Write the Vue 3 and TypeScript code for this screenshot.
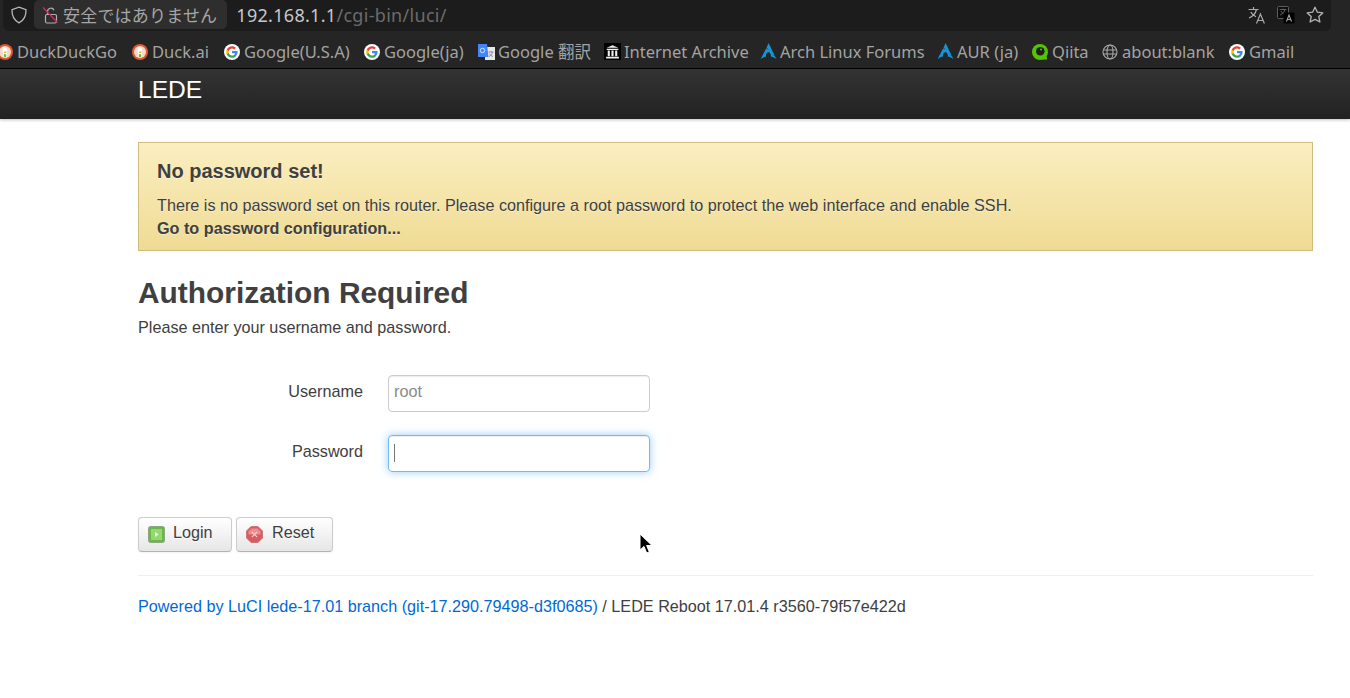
<script setup lang="ts">
interface Bookmark { label: string; icon: string; width: number }
const bookmarks: Bookmark[] = [
  { label: 'DuckDuckGo', icon: 'duck', width: 135 },
  { label: 'Duck.ai', icon: 'duck', width: 92 },
  { label: 'Google(U.S.A)', icon: 'google', width: 140 },
  { label: 'Google(ja)', icon: 'google', width: 114 },
  { label: 'Google 翻訳', icon: 'translate', width: 126 },
  { label: 'Internet Archive', icon: 'archive', width: 156 },
  { label: 'Arch Linux Forums', icon: 'arch', width: 177 },
  { label: 'AUR (ja)', icon: 'arch', width: 95 },
  { label: 'Qiita', icon: 'qiita', width: 70 },
  { label: 'about:blank', icon: 'globe', width: 127 },
  { label: 'Gmail', icon: 'google', width: 64 },
]
</script>

<template>
  <div class="screen">
    <div class="chrome">
      <div class="urlbar">
        <svg class="shield" width="18" height="18" viewBox="0 0 18 18" fill="none" stroke="#b8b8b8" stroke-width="1.3">
          <path d="M9 1.200 16 3.700c.2 6-1.700 10.400-7 13.100C3.700 14.100 1.800 9.700 2 3.700z" />
        </svg>
        <div class="security">
          <svg width="17" height="18" viewBox="0 0 17 18" fill="none">
            <path d="M5.500 8.500V5.500a3.400 3.400 0 0 1 6.500-1.300" stroke="#b0b0b0" stroke-width="1.200" />
            <rect x="3.500" y="8.500" width="11" height="8.500" rx="1.500" stroke="#b0b0b0" stroke-width="1.200" />
            <path d="M1 1.500l14.500 15" stroke="#e0245e" stroke-width="1.300" />
          </svg>
          <span>安全ではありません</span>
        </div>
        <div class="address"><span class="host">192.168.1.1</span><span class="path">/cgi-bin/luci/</span></div>
        <div class="bar-actions">
          <svg width="18" height="18" viewBox="0 0 18 18" fill="none" stroke="#ababab" stroke-width="1.200">
            <path d="M.5 3.500h10M5.500 1v2.500M8.500 3.500C7.500 7.500 4.500 10.500 1 12M2.800 6c1 2 3.200 4 5.200 4.800" />
            <path d="M8.500 17.500l3.900-9.500 4 9.500M10 14.500h4.900" />
          </svg>
          <svg width="18" height="18" viewBox="0 0 18 18">
            <rect x=".5" y=".5" width="11" height="12" rx="1" fill="#0c0c0c" stroke="#5e5e5e" stroke-width="1" />
            <path d="M2.500 3.500h7M6 2.500v1M8 3.500C7.400 6 5.500 8 3 9M4 5c.8 1.600 2.300 3 4 3.800" stroke="#6a6a6a" stroke-width=".9" fill="none" />
            <rect x="6.500" y="6.500" width="11" height="11" rx="1" fill="#000" />
            <path d="M9.500 15.500l2.500-6.500 2.500 6.500M10.300 13.500h3.400" stroke="#a8a8a8" stroke-width="1.100" fill="none" />
          </svg>
          <svg width="18" height="18" viewBox="0 0 18 18" fill="none" stroke="#b4b4b4" stroke-width="1.300">
            <path d="M9 1.200l2.400 5 5.400.7-4 3.700 1.100 5.400L9 13.400 4.100 16l1.100-5.400-4-3.700 5.400-.7z" stroke-linejoin="round" />
          </svg>
        </div>
      </div>
      <nav class="bookmarks">
        <div v-for="b in bookmarks" :key="b.label" class="bookmark" :style="{ width: b.width + 'px' }">
          <svg v-if="b.icon === 'duck'" width="16" height="16" viewBox="0 0 16 16">
            <circle cx="8" cy="8" r="8" fill="#de5833" />
            <circle cx="8" cy="8" r="6" fill="#f4d9c8" />
            <path d="M5.500 3.500c2-1 4.500.3 4.700 2.700l-.2 7-3.200.3-1.200-6.500z" fill="#fff" />
            <path d="M6.700 7.600h3l-.6 1.500H7.200z" fill="#f5b921" />
            <path d="M6.800 10l2.500.4-.2 2.700-1.900.2z" fill="#5db84a" />
          </svg>
          <svg v-else-if="b.icon === 'google'" width="16" height="16" viewBox="0 0 16 16">
            <circle cx="8" cy="8" r="8" fill="#fff" />
            <path d="M13.600 8.100c0-.5 0-.8-.1-1.200H8v2.300h3.100c-.1.700-.6 1.300-1.200 1.700v1.400h1.900c1.100-1 1.800-2.500 1.800-4.200z" fill="#4285f4" />
            <path d="M8 13.800c1.600 0 2.900-.5 3.800-1.500l-1.900-1.400c-.5.300-1.200.6-1.900.6-1.500 0-2.800-1-3.300-2.400H2.800v1.500c.9 1.900 2.900 3.200 5.200 3.200z" fill="#34a853" />
            <path d="M4.700 9.100c-.2-.7-.2-1.500 0-2.200V5.400H2.800c-.8 1.600-.8 3.600 0 5.200z" fill="#fbbc05" />
            <path d="M8 4.500c.9 0 1.600.3 2.200.9l1.700-1.700C10.900 2.800 9.600 2.200 8 2.200c-2.300 0-4.300 1.300-5.200 3.200l1.900 1.500C5.200 5.500 6.500 4.500 8 4.500z" fill="#ea4335" />
          </svg>
          <svg v-else-if="b.icon === 'translate'" width="17" height="16" viewBox="0 0 17 16">
            <rect x="7" y="3" width="10" height="13" fill="#e8e8e8" />
            <path d="M10.500 8h5M13 7v1M14.500 8c-.500 2-1.500 3.500-3.500 4.500M11.500 9.500c.7 1.300 2 2.500 3.500 3" stroke="#888" stroke-width=".9" fill="none" />
            <path d="M0 0h9l1.500 13H0z" fill="#4285f4" />
            <circle cx="4.500" cy="6.500" r="2.200" fill="none" stroke="#dbe7fc" stroke-width="1" />
          </svg>
          <svg v-else-if="b.icon === 'archive'" width="17" height="17" viewBox="0 0 16 16">
            <rect width="16" height="16" fill="#000" />
            <path d="M2.500 4.500 8 2l5.500 2.500zM2.500 5.500h11v1h-11zM2 13h12v1.500H2z" fill="#eee" />
            <path d="M3.500 7h2v5.500h-2zM7 7h2v5.500H7zM10.500 7h2v5.500h-2z" fill="#eee" />
          </svg>
          <svg v-else-if="b.icon === 'arch'" width="17" height="17" viewBox="0 0 17 17">
            <path d="M8.500 0C7.800 1.800 7.300 3 6.500 4.700c.5.500 1.100 1.100 2.100 1.800-1.100-.4-1.800-.9-2.400-1.300C5.100 7.400 3.400 10.700.5 16c2.200-1.300 4-2.100 5.600-2.400-.1-.3-.1-.6-.1-1 0-2 1.100-3.500 2.500-3.400 1.400.1 2.400 1.700 2.400 3.700 0 .3-.1.600-.1.700 1.600.300 3.300 1.100 5.700 2.400-.5-.9-.9-1.700-1.300-2.400-.7-.5-1.400-1.200-2.900-2 1 .3 1.800.500 2.300.8C11.600 6.500 10.700 3.800 8.500 0z" fill="#1793d1" />
          </svg>
          <svg v-else-if="b.icon === 'qiita'" width="16" height="16" viewBox="0 0 16 16">
            <circle cx="8" cy="8" r="8" fill="#55c500" />
            <circle cx="8.300" cy="7.300" r="4.300" fill="#1f1f1f" />
            <path d="M10 13.500l5-1v3h-5z" fill="#55c500" />
            <circle cx="9" cy="5.600" r="1" fill="#55c500" />
          </svg>
          <svg v-else width="16" height="16" viewBox="0 0 16 16" fill="none" stroke="#a8a8a8" stroke-width="1.100">
            <circle cx="8" cy="8" r="7" />
            <ellipse cx="8" cy="8" rx="3" ry="7" />
            <path d="M1 6h14M1 10h14" />
          </svg>
          <span>{{ b.label }}</span>
        </div>
      </nav>
    </div>

    <header class="topbar">
      <div class="wrap"><a class="brand">LEDE</a></div>
    </header>

    <main class="wrap content">
      <div class="alert">
        <h4>No password set!</h4>
        <p>There is no password set on this router. Please configure a root password to protect the web interface and enable SSH.</p>
        <a class="alert-link">Go to password configuration...</a>
      </div>

      <h2>Authorization Required</h2>
      <p class="lead">Please enter your username and password.</p>

      <form class="fields" @submit.prevent>
        <div class="field">
          <label>Username</label>
          <div class="input">root</div>
        </div>
        <div class="field">
          <label>Password</label>
          <div class="input focused"><i class="caret"></i></div>
        </div>
      </form>

      <div class="actions">
        <button class="btn login" type="button">
          <svg width="17" height="17" viewBox="0 0 17 17">
            <rect x=".5" y=".5" width="16" height="16" rx="2" fill="#6cb64c" stroke="#8aa97f" />
            <rect x="3" y="3" width="11" height="11" fill="#94d96f" />
            <path d="M7 6l3.500 2.500L7 11z" fill="#f3fbe9" />
          </svg>
          <span>Login</span>
        </button>
        <button class="btn reset" type="button">
          <svg width="17" height="17" viewBox="0 0 17 17">
            <path d="M5 .5h7L16.500 5v7L12 16.500H5L.5 12V5z" fill="#db5a5f" stroke="#c9787c" />
            <path d="M5.500 2.500h6l3 3v3h-12v-3z" fill="#ee8d8f" />
            <path d="M5.800 5.800l5.400 5.400M11.200 5.800l-5.400 5.400" stroke="#f8d0d0" stroke-width="1.100" />
          </svg>
          <span>Reset</span>
        </button>
      </div>

      <footer class="foot">
        <a>Powered by LuCI lede-17.01 branch (git-17.290.79498-d3f0685)</a> / LEDE Reboot 17.01.4 r3560-79f57e422d
      </footer>
    </main>

    <svg class="pointer" width="14" height="22" viewBox="0 0 14 22">
      <path d="M1 1v16l4-3.600 2.700 6.600 2.600-1.100-2.700-6.400H13z" fill="#000" stroke="#fff" stroke-width="1" />
    </svg>
  </div>
</template>

<style>
html, body { margin: 0; background: #fff; overflow: hidden; }
</style>

<style scoped>
.screen {
  position: relative;
  width: 1350px;
  height: 698px;
  overflow: hidden;
  background: #fff;
  color: #404040;
  font-family: "Liberation Sans", Arial, sans-serif;
  font-size: 16.2px;
}
.chrome { background: #252525; font-family: "Noto Sans", "Noto Sans CJK JP", sans-serif; border-bottom: 1px solid #000; }
.urlbar {
  display: flex;
  align-items: center;
  height: 31px;
  width: 1328px;
  margin-left: 3px;
  background: #1c1c1c;
  border-radius: 0 0 6px 6px;
  box-sizing: border-box;
  padding: 0 0 2px 7px;
}
.shield { flex: none; }
.security {
  display: flex;
  align-items: center;
  gap: 4px;
  height: 29px;
  margin-left: 6px;
  padding: 0 10px 0 8px;
  background: #2e2e2e;
  border-radius: 5px;
  color: #a6a6a6;
  font-size: 17px;
  letter-spacing: .2px;
  white-space: nowrap;
}
.address { margin-left: 9px; font-size: 18px; letter-spacing: .3px; white-space: nowrap; }
.host { color: #c8c8c8; }
.path { color: #6b6b6b; }
.bar-actions { display: flex; gap: 11px; margin-left: auto; padding-right: 7px; }
.bookmarks {
  display: flex;
  align-items: center;
  box-sizing: border-box;
  height: 37px;
  padding-top: 4px;
  margin-left: -3px;
  white-space: nowrap;
}
.bookmark {
  flex: none;
  display: grid;
  grid-template-columns: 16px auto;
  justify-content: start;
  align-items: center;
  column-gap: 4px;
  color: #a3a3a3;
  font-size: 16.5px;
  line-height: 20px;
}
.topbar {
  height: 50px;
  background: linear-gradient(#333333, #222222);
  box-shadow: 0 1px 3px rgba(0, 0, 0, .25);
  position: relative;
}
.wrap { margin-left: 138px; width: 1175px; }
.brand { display: block; color: #fff; font-size: 24.6px; line-height: 41px; }
.content { padding-top: 23px; }
.alert {
  box-sizing: border-box;
  height: 109px;
  padding: 16px 18px 0;
  border: 1px solid #d0bd7c;
  background: linear-gradient(#fbefc1, #efdb94);
  text-shadow: 0 1px 0 rgba(255, 255, 255, .5);
}
.alert h4 { margin: 0 0 11px; font-size: 20px; line-height: 24px; font-weight: 700; }
.alert p { margin: 0; line-height: 23px; }
.alert-link { display: block; font-weight: 700; line-height: 23px; }
h2 { margin: 24px 0 0; font-size: 29.9px; line-height: 36px; font-weight: 700; }
.lead { margin: 5px 0 0; line-height: 22px; }
.fields { margin-top: 37px; }
.field { display: flex; align-items: center; height: 36px; margin-bottom: 24px; }
.field label { width: 225px; text-align: right; margin-top: -3px; }
.input {
  box-sizing: border-box;
  width: 262px;
  height: 37px;
  margin-left: 25px;
  padding: 0 5px;
  line-height: 30px;
  border: 1px solid #ccc;
  border-radius: 4px;
  color: #8a8a8a;
  box-shadow: inset 0 1px 1px rgba(0, 0, 0, .075);
}
.focused {
  display: flex;
  align-items: center;
  border-color: rgba(82, 168, 236, .8);
  box-shadow: inset 0 1px 1px rgba(0, 0, 0, .075), 0 0 8px rgba(82, 168, 236, .6);
}
.caret { width: 1px; height: 18px; background: #777; }
.actions { display: flex; gap: 4px; margin-top: 46px; }
.btn {
  display: flex;
  align-items: flex-start;
  gap: 9px;
  box-sizing: border-box;
  height: 35px;
  padding: 8px 0 0 9px;
  border: 1px solid #ccc;
  border-bottom-color: #b3b3b3;
  border-radius: 4px;
  background: linear-gradient(#fff, #e6e6e6);
  box-shadow: inset 0 1px 0 rgba(255, 255, 255, .2), 0 1px 2px rgba(0, 0, 0, .05);
  color: #404040;
  font: inherit;
  line-height: 16px;
  text-shadow: 0 1px 1px rgba(255, 255, 255, .75);
}
.btn span { margin-top: -2px; }
.login { width: 94px; gap: 8px; }
.reset { width: 97px; }
.foot {
  margin-top: 23px;
  padding-top: 21px;
  border-top: 1px solid #eee;
  line-height: 18px;
}
.foot a { color: #0069d6; }
.pointer { position: absolute; left: 639px; top: 533px; }
</style>
